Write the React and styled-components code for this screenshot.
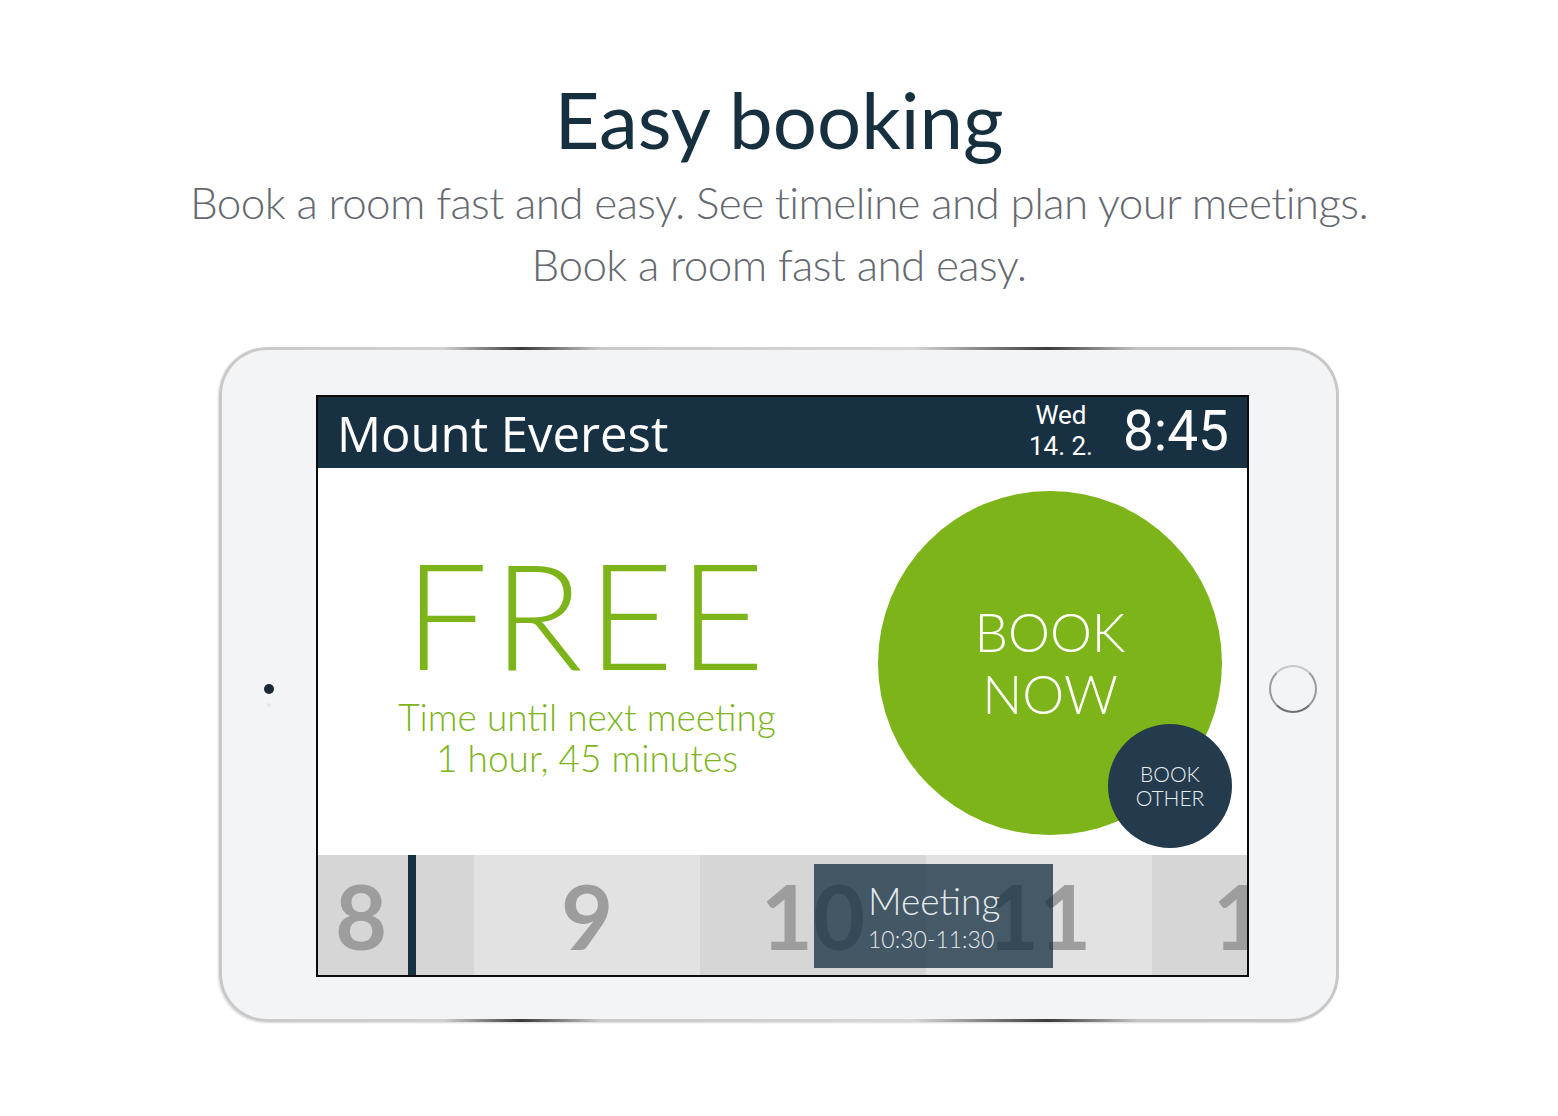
import React from "react";
import styled, { createGlobalStyle } from "styled-components";

const GlobalStyle = createGlobalStyle`
  body {
    margin: 0;
    background: #fff;
    font-family: "Lato", "Liberation Sans", sans-serif;
  }
`;

const hours = [8, 9, 10, 11, 12];

function App() {
  return (
    <>
      <GlobalStyle />
      <Page>
        <Title>Easy booking</Title>
        <Lead>
          Book a room fast and easy. See timeline and plan your meetings.
          <br />
          Book a room fast and easy.
        </Lead>
        <Device>
          <Bezel>
            <SideBay>
              <Camera />
            </SideBay>
            <Screen>
              <Header>
                <RoomName>Mount Everest</RoomName>
                <Clock>
                  <DateBox>
                    <span>Wed</span>
                    <span>14. 2.</span>
                  </DateBox>
                  <Time>8:45</Time>
                </Clock>
              </Header>
              <Body>
                <Status>
                  <Free>FREE</Free>
                  <Next>
                    Time until next meeting
                    <br />1 hour, 45 minutes
                  </Next>
                </Status>
                <Action>
                  <BookNow>
                    BOOK
                    <br />
                    NOW
                    <BookOther>
                      BOOK
                      <br />
                      OTHER
                    </BookOther>
                  </BookNow>
                </Action>
              </Body>
              <Timeline>
                <Strip>
                  {hours.map((h, i) => (
                    <Hour key={h} $light={i % 2 === 1}>
                      {h}
                    </Hour>
                  ))}
                </Strip>
                <NowLine />
                <Meeting>
                  <MeetingName>Meeting</MeetingName>
                  <MeetingTime>10:30-11:30</MeetingTime>
                </Meeting>
              </Timeline>
            </Screen>
            <SideBay $right>
              <HomeButton />
            </SideBay>
          </Bezel>
        </Device>
      </Page>
    </>
  );
}

const Page = styled.div`
  display: flex;
  flex-direction: column;
  align-items: center;
  padding-top: 74px;
  padding-bottom: 90px;
`;

const Title = styled.h1`
  margin: 0;
  font-family: "Lato", sans-serif;
  font-weight: 400;
  font-size: 78px;
  line-height: 90px;
  color: #17303f;
`;

const Lead = styled.p`
  margin: 7px 0 0;
  text-align: center;
  font-family: "Lato", sans-serif;
  font-weight: 300;
  font-size: 44px;
  line-height: 62px;
  letter-spacing: -0.6px;
  color: #65696f;
`;

const Device = styled.div`
  margin-top: 52px;
  width: 1120px;
  padding: 3px;
  box-sizing: border-box;
  border-radius: 48px;
  background: linear-gradient(
    90deg,
    #c8c8c8 0%,
    #d0d0d0 20%,
    #3a3a3a 27%,
    #c9c9c9 34%,
    #d6d6d6 62%,
    #3a3a3a 74%,
    #c4c4c4 82%,
    #c8c8c8 100%
  );
  box-shadow: -1px 1px 2px rgba(0, 0, 0, 0.15);
`;

const Bezel = styled.div`
  display: flex;
  background: #f3f4f6;
  border-radius: 45px;
  padding: 45px 0 42px;
`;

const SideBay = styled.div`
  width: ${(p) => (p.$right ? "87px" : "94px")};
  display: flex;
  align-items: center;
  justify-content: center;
  padding-top: 6px;
  box-sizing: border-box;
`;

const Camera = styled.div`
  width: 10px;
  height: 10px;
  border-radius: 50%;
  background: #1c2838;
  box-shadow: 0 16px 0 -3px #e6e7ea;
`;

const HomeButton = styled.div`
  width: 44px;
  height: 44px;
  border-radius: 50%;
  border: 2px solid #9a9a9a;
  border-top-color: #c8c8c8;
  border-bottom-color: #6f6f6f;
`;

const Screen = styled.div`
  width: 933px;
  height: 582px;
  box-sizing: border-box;
  border: 2px solid #0b0b0b;
  background: #fff;
  display: flex;
  flex-direction: column;
  overflow: hidden;
`;

const Header = styled.div`
  height: 71px;
  flex-shrink: 0;
  background: #173142;
  display: flex;
  align-items: center;
  justify-content: space-between;
  padding: 0 18px 0 19px;
  color: #fff;
`;

const RoomName = styled.div`
  font-family: "Open Sans", sans-serif;
  font-size: 49px;
  line-height: 1;
  margin-top: 2px;
`;

const Clock = styled.div`
  display: flex;
  align-items: center;
  gap: 30px;
`;

const DateBox = styled.div`
  display: flex;
  flex-direction: column;
  align-items: center;
  font-family: "Roboto", sans-serif;
  font-size: 26px;
  line-height: 31px;
  margin-top: -3px;
`;

const Time = styled.div`
  font-family: "Roboto", sans-serif;
  font-size: 55px;
  line-height: 1;
  margin-top: -2px;
`;

const Body = styled.div`
  flex: 1;
  display: flex;
`;

const Status = styled.div`
  width: 538px;
  display: flex;
  flex-direction: column;
  align-items: center;
  padding-top: 80px;
  color: #7db41a;
`;

const Free = styled.div`
  font-family: "Lato", sans-serif;
  font-weight: 300;
  font-size: 148px;
  line-height: 130px;
  letter-spacing: 5px;
`;

const Next = styled.div`
  margin-top: 18px;
  text-align: center;
  font-family: "Lato", sans-serif;
  font-weight: 300;
  font-size: 37px;
  line-height: 41px;
`;

const Action = styled.div`
  flex: 1;
  display: flex;
  justify-content: center;
  align-items: center;
`;

const BookNow = styled.div`
  position: relative;
  width: 344px;
  height: 344px;
  border-radius: 50%;
  background: #7db41a;
  color: #fff;
  display: flex;
  align-items: center;
  justify-content: center;
  text-align: center;
  font-family: "Lato", sans-serif;
  font-weight: 300;
  font-size: 53px;
  line-height: 62px;
  margin: 2px 0 0 -3px;
`;

const BookOther = styled.div`
  position: absolute;
  left: 230px;
  top: 233px;
  width: 124px;
  height: 124px;
  border-radius: 50%;
  background: #233b4d;
  display: flex;
  align-items: center;
  justify-content: center;
  font-size: 21px;
  line-height: 24px;
  font-weight: 300;
  color: #e8edf0;
`;

const Timeline = styled.div`
  position: relative;
  height: 120px;
  flex-shrink: 0;
  overflow: hidden;
`;

const Strip = styled.div`
  display: flex;
  height: 100%;
  margin-left: -70px;
`;

const Hour = styled.div`
  width: 226px;
  flex-shrink: 0;
  display: flex;
  align-items: center;
  justify-content: center;
  background: ${(p) => (p.$light ? "#e2e2e2" : "#d6d6d6")};
  font-family: "Lato", sans-serif;
  font-weight: 700;
  font-size: 90px;
  color: #9d9d9d;
`;

const NowLine = styled.div`
  position: absolute;
  top: 0;
  bottom: 0;
  left: 90px;
  width: 8px;
  background: #173142;
`;

const Meeting = styled.div`
  position: absolute;
  left: 496px;
  top: 9px;
  width: 239px;
  height: 104px;
  background: rgba(23, 48, 66, 0.77);
  color: #e3e9ed;
  font-family: "Lato", sans-serif;
  font-weight: 300;
  padding: 16px 0 0 54px;
  box-sizing: border-box;
`;

const MeetingName = styled.div`
  font-size: 37px;
  line-height: 42px;
`;

const MeetingTime = styled.div`
  font-size: 23px;
  line-height: 28px;
  margin-top: 3px;
`;

export default App;
